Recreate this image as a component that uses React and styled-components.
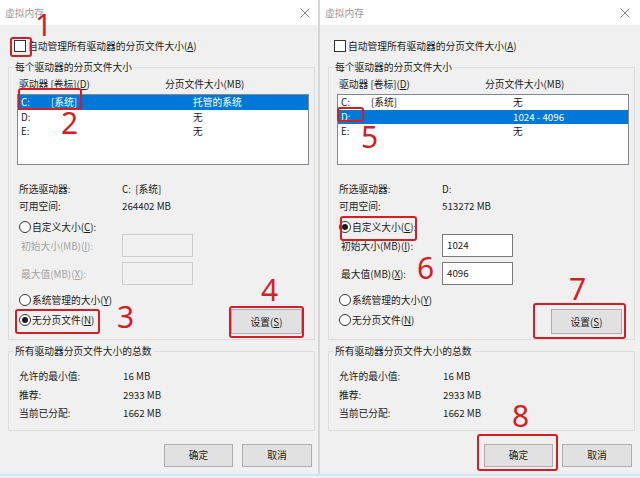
import React from "react";
import styled, { createGlobalStyle } from "styled-components";

const GlobalStyle = createGlobalStyle`
  html, body { margin: 0; padding: 0; }
  body {
    width: 640px;
    height: 478px;
    overflow: hidden;
    background: #f0f0f0;
    font-family: "Noto Sans CJK SC", "Noto Sans", sans-serif;
    font-size: 9.75px;
    color: #1b1b1b;
  }
`;

const Screen = styled.div`
  width: 640px;
  height: 478px;
  display: flex;
  flex-direction: column;
  background: #f0f0f0;
`;

const Windows = styled.div`
  display: flex;
  height: 474px;
`;

const Taskbar = styled.div`
  flex: 1;
  background: linear-gradient(#cddff2, #f3f7fb);
`;

const Window = styled.section`
  position: relative;
  width: 320px;
  display: flex;
  flex-direction: column;
  background: #f0f0f0;

  &::after {
    content: "";
    display: ${(p) => (p.$divider ? "block" : "none")};
    position: absolute;
    right: 0;
    top: 0;
    bottom: 0;
    width: 2px;
    background: #d6d6d6;
  }
`;

const TitleBar = styled.header`
  height: 25px;
  flex: none;
  background: #fff;
  display: flex;
  align-items: center;
  justify-content: space-between;
  padding: 0 10px 0 5px;
  color: #9a9a9a;
`;

const Body = styled.div`
  flex: 1;
  display: flex;
  flex-direction: column;
  padding: 14px 5px 0 8px;
`;

const CheckRow = styled.div`
  display: flex;
  align-items: center;
  gap: 2px;
  height: 14px;
  margin-left: 6px;
`;

const CheckBox = styled.span`
  width: 12px;
  height: 12px;
  box-sizing: border-box;
  border: 1px solid #333;
  background: #fff;
`;

const Group = styled.fieldset`
  margin: ${(p) => p.$gap}px 0 0;
  padding: 0;
  border: 1px solid #dcdcdc;
  min-width: 0;
`;

const Legend = styled.legend`
  margin-left: 4px;
  padding: 0 2px;
  height: 14px;
  line-height: 14px;
`;

const GroupInner = styled.div`
  padding: ${(p) => p.$pad};
`;

const ColHeads = styled.div`
  display: flex;
  margin-top: 3px;
  padding-left: 2px;
  line-height: 14px;
`;

const ColHead = styled.span`
  width: ${(p) => p.$w}px;
`;

const ListBox = styled.div`
  margin-top: 3px;
  height: 71px;
  box-sizing: border-box;
  border: 1px solid #828790;
  background: #fff;
`;

const DriveRow = styled.div`
  display: grid;
  grid-template-columns: 30px 142px 1fr;
  height: 14.5px;
  line-height: 14.5px;
  padding-left: 3px;
  background: ${(p) => (p.$sel ? "#0078d7" : "transparent")};
  color: ${(p) => (p.$sel ? "#fff" : "inherit")};
`;

const InfoBlock = styled.div`
  margin-top: 16px;
`;

const InfoRow = styled.div`
  display: flex;
  height: ${(p) => p.$h}px;
  line-height: ${(p) => p.$h}px;
  padding-left: 2px;
  white-space: pre;
`;

const InfoLabel = styled.span`
  width: ${(p) => p.$w}px;
`;

const RadioRow = styled.div`
  display: flex;
  align-items: center;
  gap: 1px;
  height: 14px;
  padding-left: 2px;
  margin-top: ${(p) => p.$gap || 0}px;
`;

const Radio = styled.span`
  width: 12px;
  height: 12px;
  box-sizing: border-box;
  border-radius: 50%;
  border: 1px solid #333;
  background: #fff;
  display: grid;
  place-items: center;

  &::after {
    content: "";
    width: 6px;
    height: 6px;
    border-radius: 50%;
    background: ${(p) => (p.$on ? "#1b1b1b" : "transparent")};
  }
`;

const SizeRow = styled.div`
  display: flex;
  align-items: center;
  padding-left: 4px;
  margin-top: ${(p) => p.$gap}px;
  color: ${(p) => (p.$off ? "#a3a3a3" : "inherit")};
`;

const SizeLabel = styled.span`
  width: 101px;
`;

const SizeInput = styled.div`
  width: 71px;
  height: 23px;
  box-sizing: border-box;
  padding: 0 4px;
  line-height: 21px;
  color: #1b1b1b;
  border: 1px solid ${(p) => (p.$off ? "#cccccc" : "#7a7a7a")};
  background: ${(p) => (p.$off ? "#f0f0f0" : "#fff")};
`;

const ActionRow = styled.div`
  display: flex;
  justify-content: space-between;
  align-items: flex-start;
  margin-top: 8px;
  padding-right: 7px;
`;

const RadioStack = styled.div`
  display: flex;
  flex-direction: column;
  gap: 6px;
`;

const Button = styled.button`
  width: ${(p) => p.$w}px;
  height: ${(p) => p.$h}px;
  margin-top: ${(p) => p.$top || 0}px;
  padding: 0;
  border: 1px solid #adadad;
  background: #e1e1e1;
  font: inherit;
  color: #1b1b1b;
`;

const Footer = styled.div`
  display: flex;
  justify-content: flex-end;
  gap: 9px;
  margin-top: 13px;
  padding-right: 3px;
`;

const Frame = styled.div`
  position: absolute;
  left: ${(p) => p.$x}px;
  top: ${(p) => p.$y}px;
  width: ${(p) => p.$w}px;
  height: ${(p) => p.$h}px;
  box-sizing: border-box;
  border: 2px solid #d11f25;
  border-radius: 3px;
  pointer-events: none;
`;

const Mark = styled.span`
  position: absolute;
  left: ${(p) => p.$x}px;
  top: ${(p) => p.$y}px;
  font-family: "Noto Sans", sans-serif;
  font-size: 30px;
  line-height: 30px;
  color: #d11f25;
`;

const Close = () => (
  <svg width="10" height="10" viewBox="0 0 10 10">
    <path d="M0.5 0.5L9.5 9.5M9.5 0.5L0.5 9.5" stroke="#8a8a8a" strokeWidth="1" fill="none" />
  </svg>
);

const Key = ({ k }) => (
  <>
    (<u>{k}</u>)
  </>
);

const windows = [
  {
    drives: [
      { d: "C:", l: "[系统]", v: "托管的系统" },
      { d: "D:", l: "", v: "无" },
      { d: "E:", l: "", v: "无" },
    ],
    sel: 0,
    picked: "C:  [系统]",
    free: "264402 MB",
    mode: "none",
    initial: "",
    max: "",
    marks: [
      { n: 1, x: 35, y: 10 },
      { n: 2, x: 61, y: 108 },
      { n: 3, x: 117, y: 302 },
      { n: 4, x: 261, y: 275 },
    ],
    frames: [
      { x: 10, y: 37, w: 22, h: 20 },
      { x: 18, y: 88, w: 64, h: 22 },
      { x: 15, y: 309, w: 85, h: 25 },
      { x: 229, y: 306, w: 75, h: 32 },
    ],
  },
  {
    drives: [
      { d: "C:", l: "[系统]", v: "无" },
      { d: "D:", l: "", v: "1024 - 4096" },
      { d: "E:", l: "", v: "无" },
    ],
    sel: 1,
    picked: "D:",
    free: "513272 MB",
    mode: "custom",
    initial: "1024",
    max: "4096",
    marks: [
      { n: 5, x: 41, y: 122 },
      { n: 6, x: 97, y: 253 },
      { n: 7, x: 249, y: 274 },
      { n: 8, x: 192, y: 401 },
    ],
    frames: [
      { x: 17, y: 107, w: 27, h: 15 },
      { x: 20, y: 216, w: 77, h: 25 },
      { x: 213, y: 303, w: 93, h: 36 },
      { x: 157, y: 434, w: 81, h: 37 },
    ],
  },
];

const VirtualMemory = ({ data, divider }) => {
  const off = data.mode !== "custom";
  return (
    <Window $divider={divider}>
      <TitleBar>
        <span>虚拟内存</span>
        <Close />
      </TitleBar>
      <Body>
        <CheckRow>
          <CheckBox />
          <span>
            自动管理所有驱动器的分页文件大小<Key k="A" />
          </span>
        </CheckRow>

        <Group $gap={7}>
          <Legend>每个驱动器的分页文件大小</Legend>
          <GroupInner $pad="0 5px 5px 8px">
            <ColHeads>
              <ColHead $w={146}>
                驱动器 [卷标]<Key k="D" />
              </ColHead>
              <span>分页文件大小(MB)</span>
            </ColHeads>
            <ListBox>
              {data.drives.map((r, i) => (
                <DriveRow key={r.d} $sel={i === data.sel}>
                  <span>{r.d}</span>
                  <span>{r.l}</span>
                  <span>{r.v}</span>
                </DriveRow>
              ))}
            </ListBox>

            <InfoBlock>
              <InfoRow $h={16.5}>
                <InfoLabel $w={103}>所选驱动器:</InfoLabel>
                <span>{data.picked}</span>
              </InfoRow>
              <InfoRow $h={16.5}>
                <InfoLabel $w={103}>可用空间:</InfoLabel>
                <span>{data.free}</span>
              </InfoRow>
            </InfoBlock>

            <RadioRow $gap={6}>
              <Radio $on={data.mode === "custom"} />
              <span>
                自定义大小<Key k="C" />:
              </span>
            </RadioRow>
            <SizeRow $gap={0} $off={off}>
              <SizeLabel>
                初始大小(MB)<Key k="I" />:
              </SizeLabel>
              <SizeInput $off={off}>{data.initial}</SizeInput>
            </SizeRow>
            <SizeRow $gap={5} $off={off}>
              <SizeLabel>
                最大值(MB)<Key k="X" />:
              </SizeLabel>
              <SizeInput $off={off}>{data.max}</SizeInput>
            </SizeRow>

            <ActionRow>
              <RadioStack>
                <RadioRow>
                  <Radio $on={data.mode === "system"} />
                  <span>
                    系统管理的大小<Key k="Y" />
                  </span>
                </RadioRow>
                <RadioRow>
                  <Radio $on={data.mode === "none"} />
                  <span>
                    无分页文件<Key k="N" />
                  </span>
                </RadioRow>
              </RadioStack>
              <Button $w={71} $h={25} $top={16}>
                设置<Key k="S" />
              </Button>
            </ActionRow>
          </GroupInner>
        </Group>

        <Group $gap={4}>
          <Legend>所有驱动器分页文件大小的总数</Legend>
          <GroupInner $pad="9px 5px 7px 8px">
            <InfoRow $h={18.5}>
              <InfoLabel $w={104}>允许的最小值:</InfoLabel>
              <span>16 MB</span>
            </InfoRow>
            <InfoRow $h={18.5}>
              <InfoLabel $w={104}>推荐:</InfoLabel>
              <span>2933 MB</span>
            </InfoRow>
            <InfoRow $h={18.5}>
              <InfoLabel $w={104}>当前已分配:</InfoLabel>
              <span>1662 MB</span>
            </InfoRow>
          </GroupInner>
        </Group>

        <Footer>
          <Button $w={69} $h={23}>确定</Button>
          <Button $w={70} $h={23}>取消</Button>
        </Footer>
      </Body>

      {data.frames.map((f, i) => (
        <Frame key={i} $x={f.x} $y={f.y} $w={f.w} $h={f.h} />
      ))}
      {data.marks.map((m) => (
        <Mark key={m.n} $x={m.x} $y={m.y}>
          {m.n}
        </Mark>
      ))}
    </Window>
  );
};

export default function App() {
  return (
    <Screen>
      <GlobalStyle />
      <Windows>
        <VirtualMemory data={windows[0]} divider />
        <VirtualMemory data={windows[1]} />
      </Windows>
      <Taskbar />
    </Screen>
  );
}
